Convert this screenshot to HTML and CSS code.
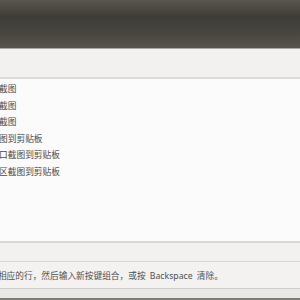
FILE: index.html
```html
<!DOCTYPE html>
<html lang="zh-CN">
<head>
  <meta charset="UTF-8" />
  <title>键盘快捷键</title>
  <link rel="stylesheet" href="styles.css">
</head>
<body>
  <div class="window">
    <header class="titlebar"></header>
    <div class="toolbar"></div>
    <ul class="shortcuts">
      <li>全屏幕截图</li>
      <li>活动窗截图</li>
      <li>选定区截图</li>
      <li>复制截图到剪贴板</li>
      <li>复制窗口截图到剪贴板</li>
      <li>复制选区截图到剪贴板</li>
    </ul>
    <div class="toolbar bottom"></div>
    <div class="hint">要编辑快捷键，请单击相应的行，然后输入新按键组合，或按 Backspace 清除。</div>
    <div class="footer"></div>
  </div>
</body>
</html>
```

FILE: styles.css
```css
html, body {
  margin: 0;
  height: 100%;
  overflow: hidden;
}
body {
  font-family: "Noto Sans", "Noto Sans CJK SC", sans-serif;
  background: #ecebea;
}
.window {
  display: flex;
  flex-direction: column;
  height: 300px;
}
.titlebar {
  height: 48px;
  flex: none;
  background: linear-gradient(#5a564f, #3e3c37 35%, #48463f 70%, #57544c);
  border-bottom: 1px solid #a9a7a1;
}
.toolbar {
  height: 28px;
  flex: none;
  background: #f2f1f0;
  border-bottom: 2px solid #dddbd8;
}
.shortcuts {
  list-style: none;
  margin: 0;
  padding: 2px 0 0;
  height: 160px;
  flex: none;
  background: #fbfbfb;
  border-bottom: 2px solid #dad8d5;
  overflow: hidden;
}
.shortcuts li {
  height: 16.6px;
  line-height: 16.6px;
  margin-left: -27px;
  font-size: 8.7px;
  color: #4a4a4a;
  white-space: nowrap;
}
.toolbar.bottom {
  height: 18px;
  border-bottom: 1px solid #d9d7d4;
}
.hint {
  height: 26px;
  flex: none;
  line-height: 28px;
  margin-left: -89px;
  font-size: 8.7px;
  word-spacing: 2px;
  color: #505050;
  white-space: nowrap;
  background: #f3f2f1;
  border-bottom: 1px solid #cfcdca;
}
.footer {
  flex: 1;
  background: #e9e8e6;
  border-bottom: 2px solid #7d7b76;
}
```
